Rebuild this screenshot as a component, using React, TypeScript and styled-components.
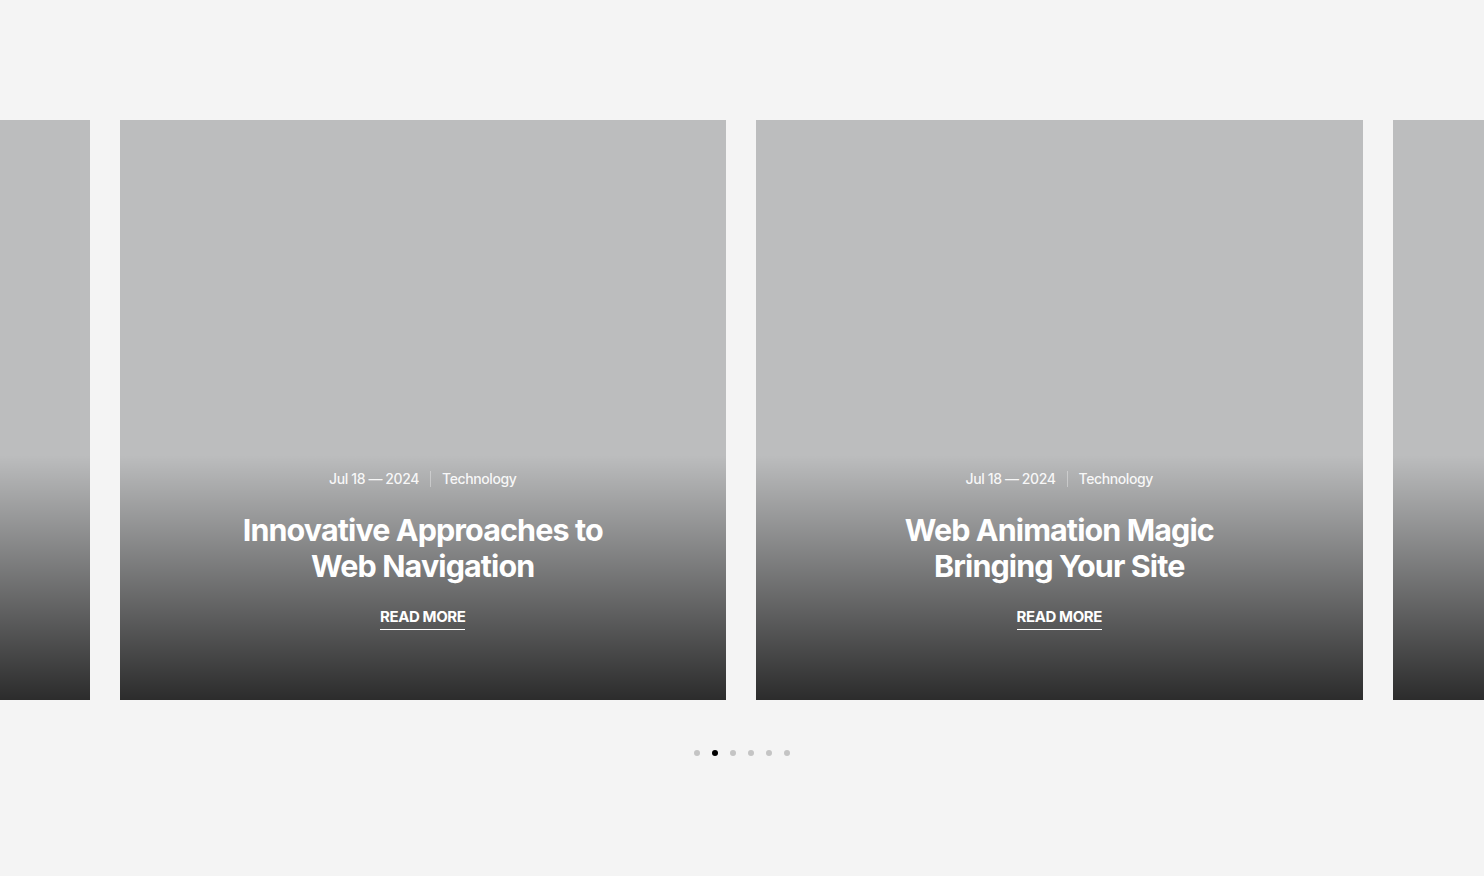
import { FC } from "react";
import styled, { createGlobalStyle } from "styled-components";

type Post = { date: string; category: string; title: string[] };

const posts: Post[] = [
  { date: "Jul 18 — 2024", category: "Technology", title: ["Designing for", "Every Screen Size"] },
  { date: "Jul 18 — 2024", category: "Technology", title: ["Innovative Approaches to", "Web Navigation"] },
  { date: "Jul 18 — 2024", category: "Technology", title: ["Web Animation Magic", "Bringing Your Site"] },
  { date: "Jul 18 — 2024", category: "Technology", title: ["The Future of", "Frontend Tooling"] },
];

const GlobalStyle = createGlobalStyle`
  html, body {
    margin: 0;
    padding: 0;
    background: #f4f4f4;
  }
  body {
    font-family: Inter, "Noto Sans", "Liberation Sans", sans-serif;
  }
`;

const App: FC = () => {
  const active = 1;
  return (
    <>
      <GlobalStyle />
      <SSection>
        <STrack>
          {posts.map((p, i) => (
            <SCard key={i}>
              <SOverlay $peek={i === 0 || i === posts.length - 1}>
                <SMeta>
                  <span>{p.date}</span>
                  <SSep />
                  <span>{p.category}</span>
                </SMeta>
                <STitle>
                  {p.title[0]}
                  <br />
                  {p.title[1]}
                </STitle>
                <SReadMore href="#">READ MORE</SReadMore>
              </SOverlay>
            </SCard>
          ))}
        </STrack>
        <SDots>
          {[0, 1, 2, 3, 4, 5].map((d) => (
            <SDot key={d} $active={d === active} />
          ))}
        </SDots>
      </SSection>
    </>
  );
};

export default App;

const SSection = styled.section`
  width: 100%;
  height: 876px;
  padding-top: 120px;
  box-sizing: border-box;
  overflow: hidden;
`;

const STrack = styled.div`
  display: flex;
  justify-content: center;
  gap: 30px;
  width: 100%;
  margin-left: -1px;
`;

const SCard = styled.article`
  flex: 0 0 606.5px;
  height: 580px;
  background: #bcbdbe;
  display: flex;
  flex-direction: column;
  justify-content: flex-end;
`;

const SOverlay = styled.div<{ $peek: boolean }>`
  height: 245px;
  box-sizing: border-box;
  padding-bottom: 70px;
  background: linear-gradient(to bottom, rgba(0, 0, 0, 0) 0%, rgba(0, 0, 0, 0.77) 100%);
  display: flex;
  flex-direction: column;
  align-items: center;
  justify-content: flex-end;
  color: #fff;
  text-align: center;

  & > * {
    visibility: ${(p) => (p.$peek ? "hidden" : "visible")};
  }
`;

const SMeta = styled.div`
  display: flex;
  align-items: center;
  font-size: 14px;
  font-weight: 500;
  letter-spacing: -0.4px;
  color: rgba(255, 255, 255, 0.92);
`;

const SSep = styled.span`
  display: inline-block;
  width: 1px;
  height: 16px;
  margin: 0 11px;
  background: rgba(255, 255, 255, 0.35);
`;

const STitle = styled.h3`
  margin: 25px 0 0;
  font-size: 30.5px;
  line-height: 36px;
  font-weight: 700;
  letter-spacing: -0.9px;
  color: #fff;
`;

const SReadMore = styled.a`
  margin-top: 23px;
  font-size: 15px;
  line-height: 20px;
  font-weight: 700;
  letter-spacing: -0.4px;
  color: #fff;
  text-decoration: none;
  padding-bottom: 2px;
  border-bottom: 1px solid #fff;
`;

const SDots = styled.div`
  display: flex;
  justify-content: center;
  gap: 12px;
  margin-top: 50px;
`;

const SDot = styled.span<{ $active: boolean }>`
  width: 6px;
  height: 6px;
  border-radius: 50%;
  background: ${(p) => (p.$active ? "#000" : "#c4c4c4")};
`;
